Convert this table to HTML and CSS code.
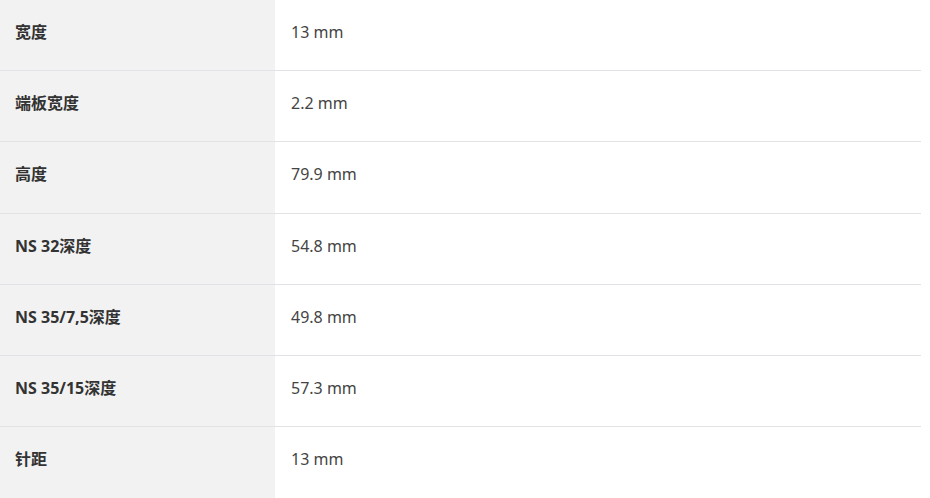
FILE: index.html
```html
<!DOCTYPE html>
<html lang="zh">
<head>
<meta charset="utf-8">
<link rel="stylesheet" href="styles.css">
</head>
<body>
<table class="specs">
  <tr><th>宽度</th><td>13 mm</td></tr>
  <tr><th>端板宽度</th><td>2.2 mm</td></tr>
  <tr><th>高度</th><td>79.9 mm</td></tr>
  <tr><th>NS 32深度</th><td>54.8 mm</td></tr>
  <tr><th>NS 35/7,5深度</th><td>49.8 mm</td></tr>
  <tr><th>NS 35/15深度</th><td>57.3 mm</td></tr>
  <tr><th>针距</th><td>13 mm</td></tr>
</table>
</body>
</html>
```
FILE: styles.css
```css
html, body {
  margin: 0;
  padding: 0;
  background: #fff;
}
.specs {
  width: 921px;
  border-collapse: collapse;
  font-family: "Noto Sans", "Noto Sans CJK SC", sans-serif;
  font-size: 16px;
  line-height: 22px;
}
.specs th, .specs td {
  text-align: left;
  vertical-align: top;
  padding: 21px 0 27.2px;
  height: 22px;
  border-bottom: 1px solid #e2e2e6;
}
.specs tr:last-child th, .specs tr:last-child td {
  border-bottom: none;
  padding-bottom: 30px;
}
.specs th {
  width: 260px;
  padding-left: 15px;
  background: #f2f2f2;
  font-weight: 700;
  color: #333;
}
.specs td {
  padding-left: 16px;
  font-weight: 400;
  color: #444;
}
```
